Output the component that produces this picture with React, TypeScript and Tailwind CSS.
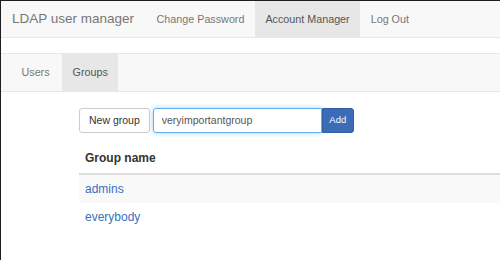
import { useState } from 'react'

const groups = ['admins', 'everybody']

export default function App() {
  const [name, setName] = useState('veryimportantgroup')

  return (
    <div className="w-[500px] h-[260px] overflow-hidden bg-white border-t border-l border-[#1e1e1e] font-['Liberation_Sans',Arial,sans-serif] text-[10.5px] text-[#333]">
      {/* top navbar */}
      <nav className="flex h-[37px] bg-[#f8f8f8] border-b border-[#e7e7e7] text-[10.75px]">
        <a className="flex items-center pl-[11px] pr-[12px] text-[13.5px] text-[#777]">LDAP user manager</a>
        <a className="flex items-center px-[10.5px] text-[#777]">Change Password</a>
        <a className="flex items-center px-[10.5px] text-[#555] bg-[#e7e7e7]">Account Manager</a>
        <a className="flex items-center px-[10.5px] text-[#777]">Log Out</a>
      </nav>

      {/* sub navbar */}
      <nav className="mt-[15px] flex h-[39px] px-[10px] bg-[#f8f8f8] border-y border-[#e7e7e7] text-[10.75px]">
        <a className="flex items-center px-[10.5px] text-[#777]">Users</a>
        <a className="ml-[2px] flex items-center px-[10.5px] text-[#555] bg-[#e7e7e7]">Groups</a>
      </nav>

      <div className="pl-[78px] pt-[16px]">
        <div className="flex h-[25px]">
          <button className="px-[9px] rounded-[3px] border border-[#ccc] bg-white text-[#333]">New group</button>
          <input
            value={name}
            onChange={(e) => setName(e.target.value)}
            className="ml-[3px] w-[169px] px-[8px] rounded-l-[3px] border border-[#66afe9] shadow-[0_0_5px_rgba(102,175,233,0.6)] outline-none text-[#555] text-[10.5px]"
          />
          <button className="w-[32px] rounded-r-[3px] border border-[#2e5fa4] bg-[#3b6cb5] text-white text-[9.5px]">Add</button>
        </div>

        <table className="mt-[11px] w-[460px] border-collapse text-[12px]">
          <thead>
            <tr>
              <th className="text-left font-bold px-[6px] py-[6px] leading-[17px] border-b-2 border-[#ddd]">Group name</th>
            </tr>
          </thead>
          <tbody>
            {groups.map((g, i) => (
              <tr key={g} className={i % 2 === 0 ? 'bg-[#f9f9f9]' : ''}>
                <td className="px-[6px] py-[6px] leading-[16px] border-t border-[#ddd] first:border-t-0">
                  <a className="text-[#3a6fbf]">{g}</a>
                </td>
              </tr>
            ))}
          </tbody>
        </table>
      </div>
    </div>
  )
}
